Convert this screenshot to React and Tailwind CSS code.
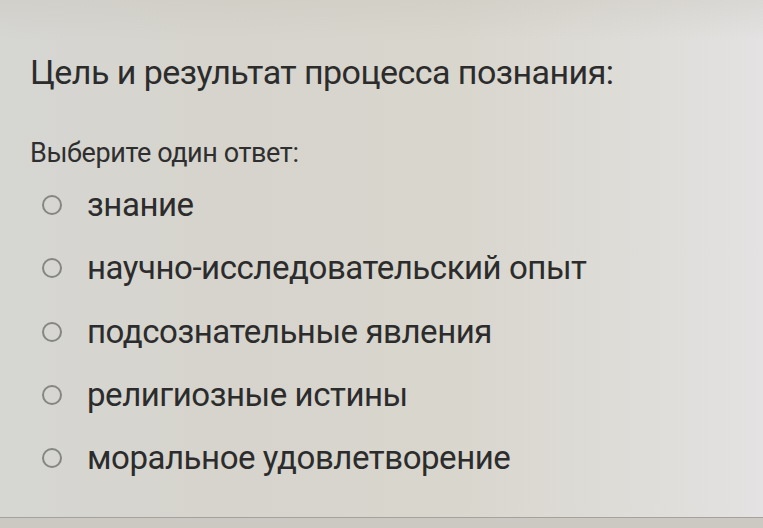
import React from "react";

const options = [
  "знание",
  "научно-исследовательский опыт",
  "подсознательные явления",
  "религиозные истины",
  "моральное удовлетворение",
];

export default function App() {
  return (
    <div
      className="relative w-[763px] h-[528px] overflow-hidden bg-[linear-gradient(90deg,#d6d6d3_0%,#d6d4cc_30%,#d8d6cd_60%,#dfddd9_85%,#e4e2e2_100%)] text-[#2a2a2a]"
      style={{ fontFamily: "Roboto, 'Noto Sans', sans-serif" }}
    >
      <div className="absolute inset-x-0 top-0 h-[40px] bg-[linear-gradient(180deg,rgba(200,197,188,0.35),rgba(200,197,188,0))]" />
      <div className="relative flex flex-col pl-[30px] pt-[52px]">
        <h1 className="text-[34px] leading-[40px] tracking-[-0.55px] text-[#2c2c2c]">
          Цель и результат процесса познания:
        </h1>
        <p className="mt-[46px] text-[27px] leading-[30px] text-[#2f2f2f] tracking-[-0.4px]">
          Выберите один ответ:
        </p>
        <ul className="mt-[19px] flex flex-col gap-[27.3px] pl-[12px]">
          {options.map((o) => (
            <li key={o} className="flex items-center gap-[25px] h-[36px]">
              <span className="w-[20px] h-[20px] rounded-full border-[2.5px] border-[#858583] shrink-0" />
              <span className="text-[33px] leading-[36px] text-[#2c2c2c] tracking-[-0.45px] whitespace-nowrap">
                {o}
              </span>
            </li>
          ))}
        </ul>
      </div>
      <div className="absolute inset-x-0 bottom-0 h-[11px] bg-[#cbc9c2] border-t border-[#a3a29e]" />
    </div>
  );
}
